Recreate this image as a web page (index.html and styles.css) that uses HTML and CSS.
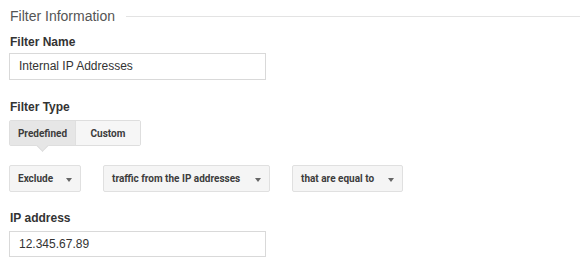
FILE: index.html
```html
<!DOCTYPE html>
<html lang="en">
<head>
    <meta charset="UTF-8">
    <meta name="viewport" content="width=device-width, initial-scale=1.0">
    <title>Filter Information</title>
    <link rel="stylesheet" href="styles.css">
</head>
<body>
    <div class="page">
        <!-- Section heading with rule -->
        <div class="section-title">
            <span>Filter Information</span>
            <div class="rule"></div>
        </div>

        <label class="field-label label-first">Filter Name</label>
        <div class="text-input">Internal IP Addresses</div>

        <label class="field-label">Filter Type</label>
        <div class="segmented">
            <div class="segment active">Predefined</div>
            <div class="segment">Custom</div>
        </div>

        <!-- Predefined filter dropdowns -->
        <div class="dropdown-row">
            <div class="dropdown dd-exclude"><span>Exclude</span><span class="caret"></span></div>
            <div class="dropdown dd-traffic"><span>traffic from the IP addresses</span><span class="caret"></span></div>
            <div class="dropdown dd-equal"><span>that are equal to</span><span class="caret"></span></div>
        </div>

        <label class="field-label label-ip">IP address</label>
        <div class="text-input input-ip">12.345.67.89</div>
    </div>
</body>
</html>
```

FILE: styles.css
```css
* {
    box-sizing: border-box;
    margin: 0;
    padding: 0;
}
body {
    font-family: "Liberation Sans", Arial, sans-serif;
    background-color: #ffffff;
    color: #333333;
}
.page {
    padding: 6px 0 0 9px;
}
.section-title {
    display: flex;
    align-items: center;
    height: 20px;
    font-size: 14px;
    color: #555555;
    padding-left: 1px;
}
.section-title .rule {
    flex: 1;
    height: 1px;
    background-color: #e3e3e3;
    margin-left: 11px;
}
.field-label {
    display: block;
    font-size: 12px;
    font-weight: bold;
    line-height: 14px;
    color: #333333;
    padding-left: 1px;
    margin-top: 20px;
    margin-bottom: 6px;
}
.label-first {
    margin-top: 9px;
    margin-bottom: 4px;
}
.label-ip {
    margin-top: 19px;
}
.text-input {
    width: 257px;
    height: 27px;
    border: 1px solid #d9d9d9;
    font-size: 12px;
    line-height: 25px;
    padding-left: 9px;
    color: #333333;
}
.input-ip {
    height: 26px;
    line-height: 24px;
}
.segmented {
    position: relative;
    display: flex;
    width: 132px;
    height: 26px;
    border: 1px solid #dedede;
    border-radius: 2px;
    font-family: Roboto, "Liberation Sans", sans-serif;
    font-size: 10px;
    font-weight: bold;
    color: #3c3c3c;
    white-space: nowrap;
}
.segment {
    display: flex;
    align-items: center;
    justify-content: center;
    background-color: #f6f6f6;
}
.segment.active {
    width: 66px;
    background-color: #e6e6e6;
    border-right: 1px solid #e0e0e0;
}
.segment:last-child {
    flex: 1;
}
/* pointer under the active segment */
.segment.active::after {
    content: "";
    position: absolute;
    left: 28px;
    top: 20px;
    width: 8px;
    height: 8px;
    background-color: #e6e6e6;
    border-right: 1px solid #dedede;
    border-bottom: 1px solid #dedede;
    transform: rotate(45deg);
}
.dropdown-row {
    display: flex;
    gap: 22px;
    margin-top: 19px;
}
.dropdown {
    display: flex;
    align-items: center;
    justify-content: space-between;
    height: 27px;
    padding: 0 8px 0 8px;
    background-color: #f5f5f5;
    border: 1px solid #e0e0e0;
    border-radius: 2px;
    font-family: Roboto, "Liberation Sans", sans-serif;
    font-size: 10px;
    font-weight: bold;
    color: #3c3c3c;
    white-space: nowrap;
}
.dd-exclude {
    width: 72px;
}
.dd-traffic {
    width: 167px;
}
.dd-equal {
    width: 111px;
}
.caret {
    flex-shrink: 0;
    width: 0;
    height: 0;
    border-left: 3.5px solid transparent;
    border-right: 3.5px solid transparent;
    border-top: 4px solid #666666;
    margin-top: 2px;
}
```
